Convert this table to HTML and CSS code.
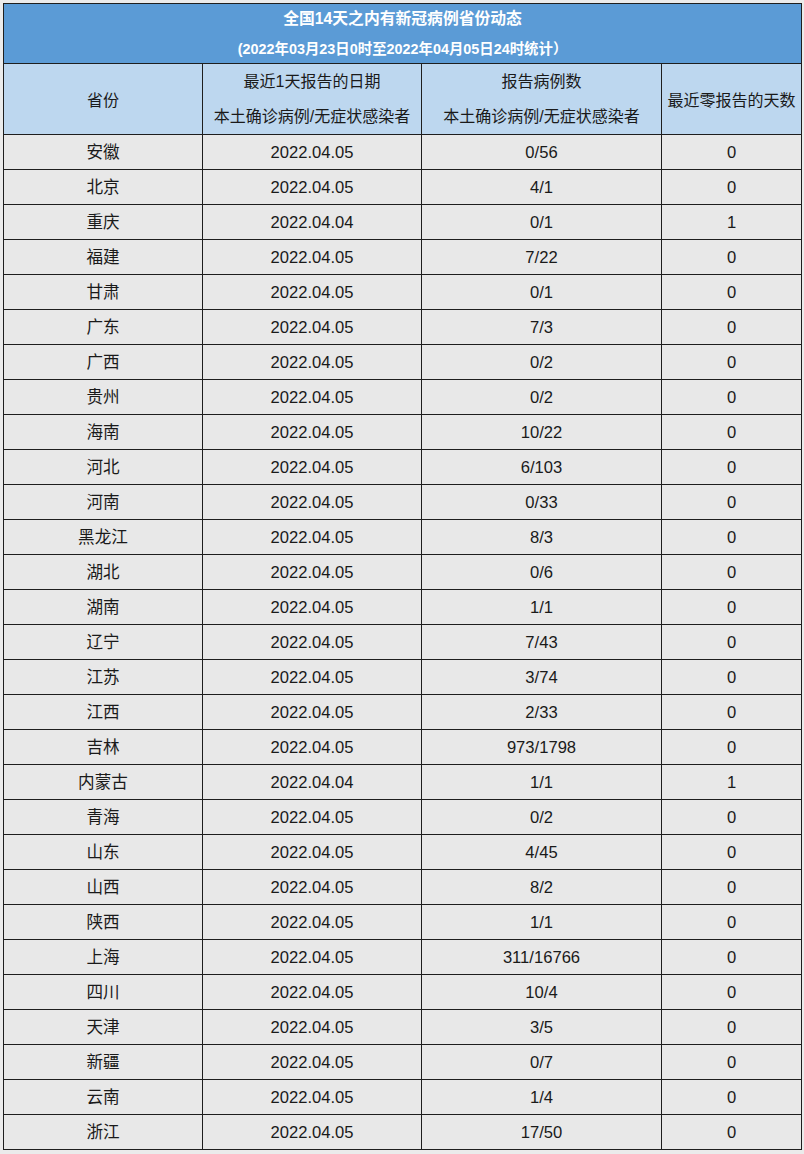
FILE: index.html
```html
<!DOCTYPE html>
<html lang="zh-CN">
<head>
<meta charset="utf-8">
<title>全国14天之内有新冠病例省份动态</title>
<link rel="stylesheet" href="styles.css">
</head>
<body>
<table class="stats">
  <colgroup>
    <col class="c1"><col class="c2"><col class="c3"><col class="c4">
  </colgroup>
  <thead>
    <tr class="title-row">
      <th colspan="4">
        <div class="title">全国14天之内有新冠病例省份动态</div>
        <div class="subtitle">(2022年03月23日0时至2022年04月05日24时统计）</div>
      </th>
    </tr>
    <tr class="head-row">
      <th>省份</th>
      <th><div class="hl">最近1天报告的日期</div><div class="hl">本土确诊病例/无症状感染者</div></th>
      <th><div class="hl">报告病例数</div><div class="hl">本土确诊病例/无症状感染者</div></th>
      <th>最近零报告的天数</th>
    </tr>
  </thead>
  <tbody>
    <tr><td>安徽</td><td>2022.04.05</td><td>0/56</td><td>0</td></tr>
    <tr><td>北京</td><td>2022.04.05</td><td>4/1</td><td>0</td></tr>
    <tr><td>重庆</td><td>2022.04.04</td><td>0/1</td><td>1</td></tr>
    <tr><td>福建</td><td>2022.04.05</td><td>7/22</td><td>0</td></tr>
    <tr><td>甘肃</td><td>2022.04.05</td><td>0/1</td><td>0</td></tr>
    <tr><td>广东</td><td>2022.04.05</td><td>7/3</td><td>0</td></tr>
    <tr><td>广西</td><td>2022.04.05</td><td>0/2</td><td>0</td></tr>
    <tr><td>贵州</td><td>2022.04.05</td><td>0/2</td><td>0</td></tr>
    <tr><td>海南</td><td>2022.04.05</td><td>10/22</td><td>0</td></tr>
    <tr><td>河北</td><td>2022.04.05</td><td>6/103</td><td>0</td></tr>
    <tr><td>河南</td><td>2022.04.05</td><td>0/33</td><td>0</td></tr>
    <tr><td>黑龙江</td><td>2022.04.05</td><td>8/3</td><td>0</td></tr>
    <tr><td>湖北</td><td>2022.04.05</td><td>0/6</td><td>0</td></tr>
    <tr><td>湖南</td><td>2022.04.05</td><td>1/1</td><td>0</td></tr>
    <tr><td>辽宁</td><td>2022.04.05</td><td>7/43</td><td>0</td></tr>
    <tr><td>江苏</td><td>2022.04.05</td><td>3/74</td><td>0</td></tr>
    <tr><td>江西</td><td>2022.04.05</td><td>2/33</td><td>0</td></tr>
    <tr><td>吉林</td><td>2022.04.05</td><td>973/1798</td><td>0</td></tr>
    <tr><td>内蒙古</td><td>2022.04.04</td><td>1/1</td><td>1</td></tr>
    <tr><td>青海</td><td>2022.04.05</td><td>0/2</td><td>0</td></tr>
    <tr><td>山东</td><td>2022.04.05</td><td>4/45</td><td>0</td></tr>
    <tr><td>山西</td><td>2022.04.05</td><td>8/2</td><td>0</td></tr>
    <tr><td>陕西</td><td>2022.04.05</td><td>1/1</td><td>0</td></tr>
    <tr><td>上海</td><td>2022.04.05</td><td>311/16766</td><td>0</td></tr>
    <tr><td>四川</td><td>2022.04.05</td><td>10/4</td><td>0</td></tr>
    <tr><td>天津</td><td>2022.04.05</td><td>3/5</td><td>0</td></tr>
    <tr><td>新疆</td><td>2022.04.05</td><td>0/7</td><td>0</td></tr>
    <tr><td>云南</td><td>2022.04.05</td><td>1/4</td><td>0</td></tr>
    <tr><td>浙江</td><td>2022.04.05</td><td>17/50</td><td>0</td></tr>
  </tbody>
</table>
</body>
</html>
```

FILE: styles.css
```css
html, body {
  margin: 0;
  padding: 0;
  background: #ebebeb;
}
body {
  padding: 3px 0 0 3px;
  font-family: "Liberation Sans", "Noto Sans CJK SC", sans-serif;
  color: #1a1a1a;
}
.stats {
  border-collapse: collapse;
  table-layout: fixed;
  width: 798px;
}
.c1 { width: 199px; }
.c2 { width: 219px; }
.c3 { width: 240px; }
.c4 { width: 140px; }

.stats th, .stats td {
  border: 1px solid #1e1e1e;
  padding: 0;
  text-align: center;
  vertical-align: middle;
}
.title-row th {
  background: #5b9bd6;
  color: #ffffff;
  height: 59px;
  font-weight: bold;
}
.title {
  font-size: 15.8px;
  line-height: 30px;
  height: 30px;
}
.subtitle {
  font-size: 14.4px;
  line-height: 30px;
  height: 29px;
}
.head-row th {
  background: #bdd7ef;
  font-weight: normal;
  font-size: 16px;
  height: 70px;
}
.hl {
  line-height: 35px;
  height: 35px;
}
.stats td {
  background: #e8e8e8;
  font-size: 16.6px;
  height: 35px;
  line-height: 20px;
  padding-top: 1px;
  box-sizing: border-box;
}
```
